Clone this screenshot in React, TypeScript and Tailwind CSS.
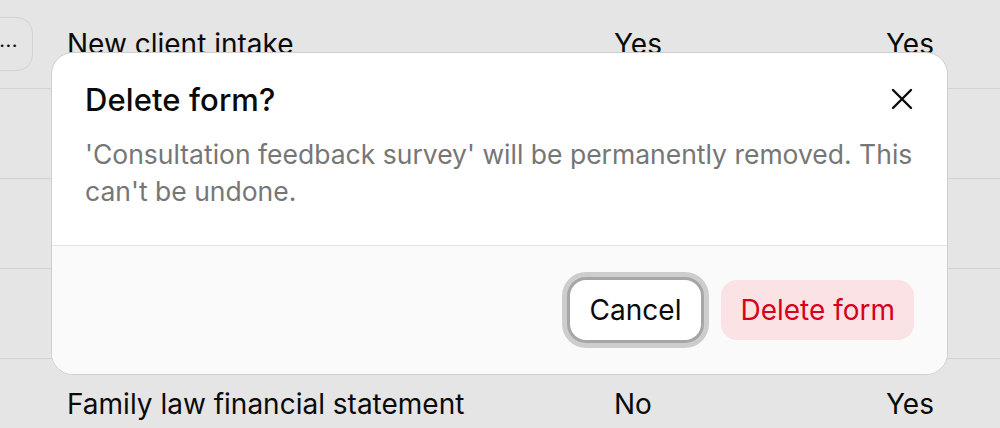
import React from "react";

const rows = [
  { name: "New client intake", a: "Yes", b: "Yes" },
  { name: "", a: "", b: "" },
  { name: "", a: "", b: "" },
  { name: "", a: "", b: "" },
  { name: "Family law financial statement", a: "No", b: "Yes" },
];

export default function App() {
  return (
    <div
      className="relative w-[1000px] h-[428px] overflow-hidden bg-[#e5e5e5] text-[#0a0a0a]"
      style={{ fontFamily: "Inter, 'Noto Sans', sans-serif" }}
    >
      {/* background table */}
      <div className="flex flex-col mt-[-1px]">
        {rows.map((r, i) => (
          <div
            key={i}
            className="flex items-center h-[90px] border-b border-[#d2d2d2] text-[28px] shrink-0"
          >
            <div className="w-[67px] shrink-0 flex items-center">
              {i === 0 && (
                <div className="ml-[-20px] w-[53px] h-[54px] rounded-[16px] border border-[#d2d2d2] flex items-center justify-end pr-[14px]">
                  <span className="text-[20px] leading-none tracking-[0.5px] -mt-[8px]">...</span>
                </div>
              )}
            </div>
            <div className="w-[547px] shrink-0">{r.name}</div>
            <div className="w-[272px] shrink-0">{r.a}</div>
            <div>{r.b}</div>
          </div>
        ))}
      </div>

      {/* dialog */}
      <div className="absolute left-[51px] top-[52px] w-[897px] h-[323px] rounded-[22px] border border-[#cfcfcf] bg-white overflow-hidden flex flex-col">
        <div className="relative px-[33px] pt-[29px] pb-[35px] border-b border-[#e3e3e3]">
          <h2 className="text-[31px] leading-[36px] font-medium tracking-[0.1px]">Delete form?</h2>
          <p className="mt-[18px] w-[845px] text-[26.5px] leading-[37px] text-[#767676]">
            'Consultation feedback survey' will be permanently removed. This can't be undone.
          </p>
          <button className="absolute right-[30px] top-[31px] w-[30px] h-[30px] flex items-center justify-center">
            <svg width="22" height="22" viewBox="0 0 22 22" fill="none" stroke="#0a0a0a" strokeWidth="2.4" strokeLinecap="round">
              <path d="M2 2L20 20M20 2L2 20" />
            </svg>
          </button>
        </div>
        <div className="flex-1 bg-[#fafafa] flex items-center justify-end gap-[20px] px-[33px]">
          <button className="h-[60px] px-[20px] rounded-[16px] bg-white text-[28px] text-[#0a0a0a] shadow-[0_0_0_3px_#a6a6a6,0_0_0_8px_#cdcdcd]">
            Cancel
          </button>
          <button className="h-[60px] px-[19px] rounded-[16px] bg-[#fbe2e4] text-[28px] text-[#d6001c]">
            Delete form
          </button>
        </div>
      </div>
    </div>
  );
}
